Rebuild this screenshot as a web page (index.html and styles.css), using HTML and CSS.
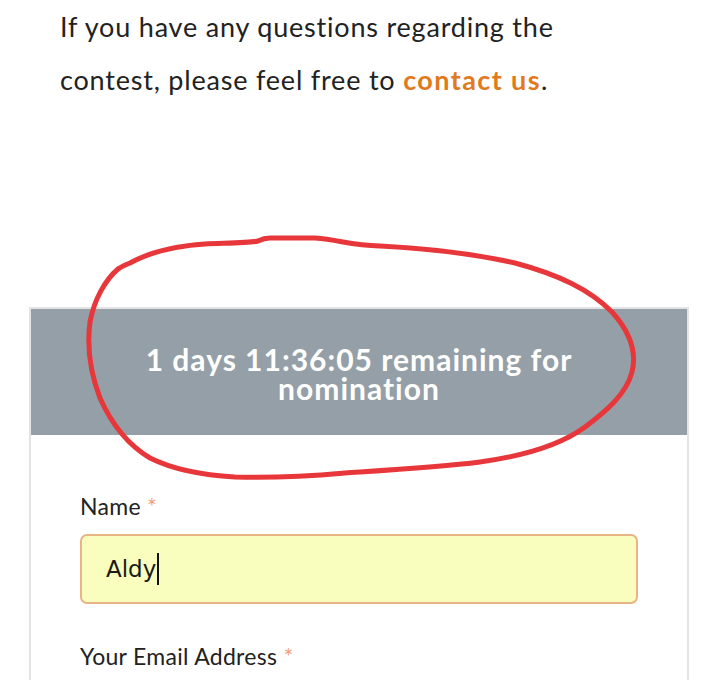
FILE: index.html
```html
<!DOCTYPE html>
<html>
<head>
<meta charset="utf-8">
<link rel="stylesheet" href="styles.css">
</head>
<body>
<div class="page">
  <p class="intro">If you have any questions regarding the contest, please feel free to <a class="link" href="#">contact us</a>.</p>
  <div class="card">
    <div class="card-head">
      <h2 class="timer">1 days 11:36:05 remaining for nomination</h2>
    </div>
    <div class="card-body">
      <label class="label">Name <span class="req">*</span></label>
      <div class="input"><span class="value">Aldy</span><span class="caret"></span></div>
      <label class="label label-next">Your Email Address <span class="req">*</span></label>
    </div>
  </div>
  <svg class="scribble" width="717" height="680" viewBox="0 0 717 680">
    <path d="M130 263 C150 252 175 246 205 244 C230 243 250 243 258 241 C262 239 264 238 270 238 L315 238 C340 240 350 245 380 246 C420 248 470 253 515 263 C560 275 590 290 612 312 C630 332 637 352 632 372 C626 395 605 412 585 427 C562 444 530 455 480 462 C440 467 390 470 345 473 C300 477 265 478 235 477 C200 475 170 468 150 458 C128 445 112 425 100 398 C90 372 87 345 90 322 C94 300 105 280 118 269 C123 266 127 264 130 263 Z" />
  </svg>
</div>
</body>
</html>
```
FILE: styles.css
```css
html, body {
  margin: 0;
  padding: 0;
  background: #ffffff;
}
.page {
  position: relative;
  width: 717px;
  height: 680px;
  overflow: hidden;
  font-family: Lato, "Liberation Sans", sans-serif;
  color: #222222;
}
.intro {
  margin: 0;
  padding: 0 0 0 60px;
  width: 530px;
  font-size: 27px;
  line-height: 53px;
  letter-spacing: 0.8px;
}
.link {
  color: #e07a1c;
  font-weight: 700;
  text-decoration: none;
  letter-spacing: 1.4px;
}
.card {
  margin: 201px 0 0 29px;
  width: 656px;
  border: 2px solid #e3e3e3;
  border-bottom: none;
}
.card-head {
  height: 126px;
  background: #959fa7;
  display: flex;
  align-items: center;
  justify-content: center;
}
.timer {
  margin: 0;
  padding: 4px 0 0;
  width: 500px;
  text-align: center;
  color: #ffffff;
  font-size: 30px;
  line-height: 29px;
  font-weight: 700;
  letter-spacing: 1px;
}
.card-body {
  padding: 58px 49px 40px 49px;
  display: flex;
  flex-direction: column;
}
.label {
  font-size: 23px;
  line-height: 26px;
  letter-spacing: 0.3px;
  color: #222222;
}
.req {
  color: #f0a07c;
}
.input {
  margin-top: 15px;
  height: 66px;
  width: 530px;
  border: 2px solid #e8b486;
  border-radius: 7px;
  background: #f9fdbd;
  display: flex;
  align-items: center;
  padding-left: 24px;
}
.value {
  font-family: "DejaVu Sans", sans-serif;
  font-size: 23px;
  color: #1a1a1a;
}
.caret {
  width: 2px;
  height: 32px;
  background: #111111;
  margin-left: 1px;
}
.label-next {
  margin-top: 39px;
}
.scribble {
  position: absolute;
  left: 0;
  top: 0;
  pointer-events: none;
}
.scribble path {
  fill: none;
  stroke: #e8373a;
  stroke-width: 5;
  stroke-linecap: round;
  stroke-linejoin: round;
}
```
